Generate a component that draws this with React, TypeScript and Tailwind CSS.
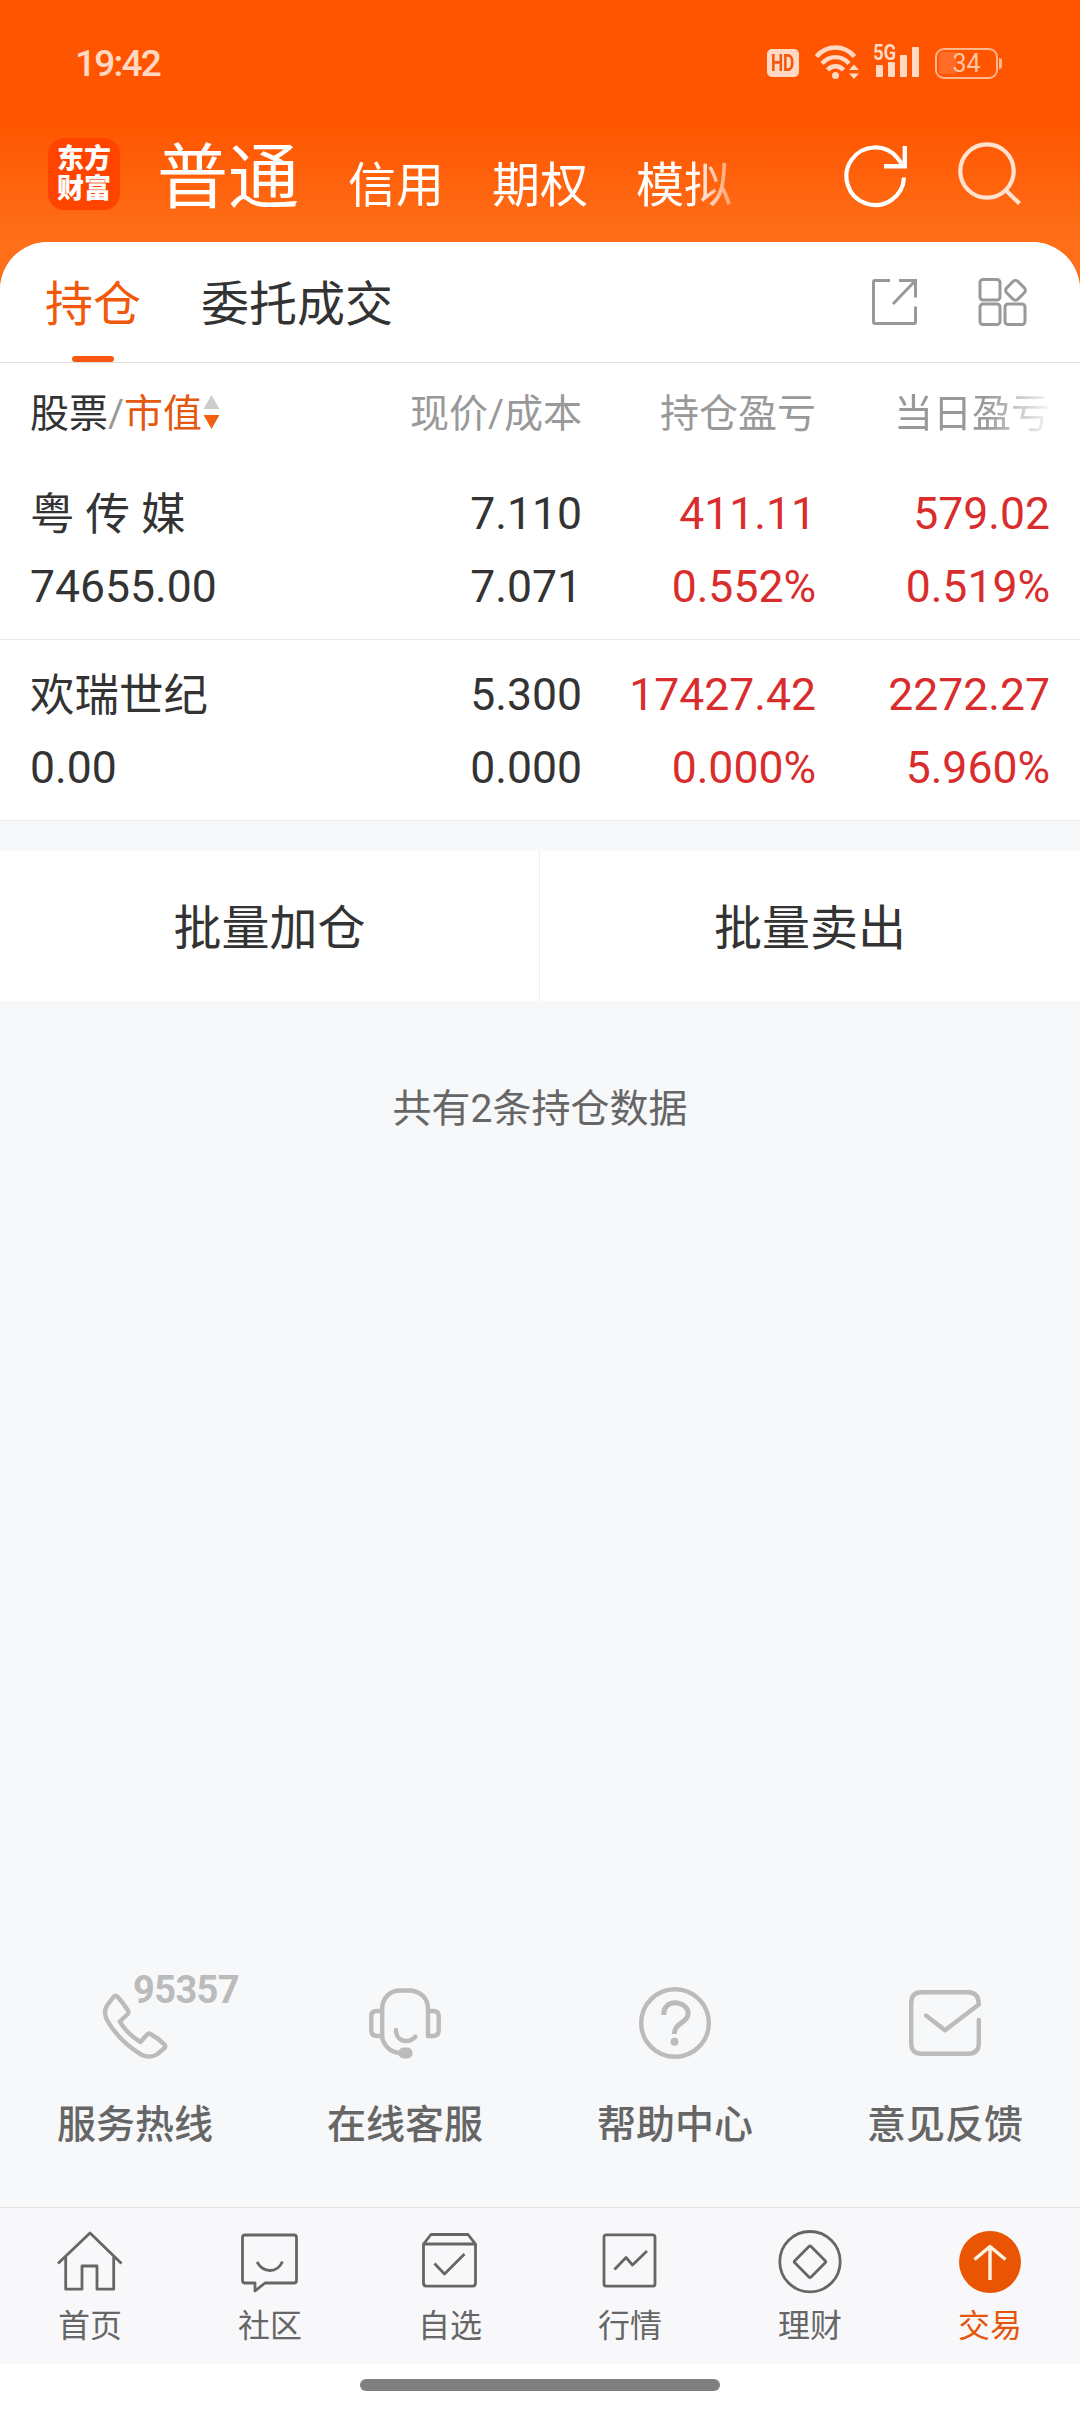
import type { ReactNode } from "react";

const holdings = [
  {
    name: "粤 传 媒",
    value: "74655.00",
    price: "7.110",
    cost: "7.071",
    profit: "411.11",
    profitRate: "0.552%",
    today: "579.02",
    todayRate: "0.519%",
  },
  {
    name: "欢瑞世纪",
    value: "0.00",
    price: "5.300",
    cost: "0.000",
    profit: "17427.42",
    profitRate: "0.000%",
    today: "2272.27",
    todayRate: "5.960%",
  },
];

function StatusBar() {
  return (
    <div className="flex h-[126px] items-center pl-[75px] pr-[78px] text-[#ffd9c4]">
      <span className="text-[37px] font-medium leading-none tracking-[-1.8px]">19:42</span>

      <div className="ml-auto flex items-center">
        <span className="flex h-7 w-8 items-center justify-center rounded-[5px] bg-[#ffd9c4] text-[23px] font-bold leading-none text-[#f4570f]">
          <span className="scale-x-75">HD</span>
        </span>

        <svg className="ml-4" width="44" height="38" viewBox="0 0 44 38" fill="none">
          <g stroke="currentColor" strokeWidth="4.4">
            <path d="M1.5 12.5C12 0.5 29 0.5 39.5 12.5" />
            <path d="M7 19.5C14.5 11 26.5 11 34 19.5" />
            <path d="M12.5 26C17 21 24 21 28.5 26" />
          </g>
          <circle cx="20.5" cy="31.5" r="3.5" fill="currentColor" />
          <path d="M34 26L39 20.5L44 26ZM34 29.5L39 35L44 29.5Z" fill="currentColor" />
        </svg>

        <div className="relative ml-3.5 h-[38px] w-[46px]">
          <span className="absolute left-0 top-[-2px] origin-left scale-x-[0.84] text-[22px] font-bold leading-[22px]">
            5G
          </span>
          <svg className="absolute left-0 top-0" width="46" height="38" viewBox="0 0 46 38" fill="currentColor">
            <rect x="3" y="21" width="7" height="12" rx="1" />
            <rect x="15" y="18" width="7" height="15" rx="1" />
            <rect x="27" y="11" width="7" height="22" rx="1" />
            <rect x="39" y="3" width="7" height="30" rx="1" />
          </svg>
        </div>

        <div className="ml-4 flex items-center">
          <div className="relative flex h-[31px] w-[63px] items-center justify-center overflow-hidden rounded-[9px] border-[2.5px] border-[#ffb78f]">
            <div className="absolute left-[2px] top-[2px] h-[22px] w-[17px] rounded-l-[4px] bg-[#ff6d27]" />
            <span className="relative text-[25px] leading-none text-[#ffc5a3]">34</span>
          </div>
          <div className="ml-px h-[11px] w-[3px] rounded-r-full bg-[#ffb78f]" />
        </div>
      </div>
    </div>
  );
}

function Header() {
  return (
    <header className="flex h-[116px] pl-12 text-white">
      <div className="mt-3 flex h-[72px] w-[72px] flex-col items-center justify-center rounded-2xl bg-[#ff4400] text-[27px] font-black leading-[30px]">
        <span>东方</span>
        <span>财富</span>
      </div>

      <div className="ml-[37px] flex h-[116px] w-[591px] items-baseline whitespace-nowrap pt-4 text-5xl leading-[72px] [mask-image:linear-gradient(to_right,#000_535px,transparent_600px)]">
        <span className="w-[191px] text-[71px]">普通</span>
        <span className="w-36">信用</span>
        <span className="w-36">期权</span>
        <span>模拟</span>
      </div>

      <svg className="ml-[94px] mt-4" width="68" height="68" viewBox="0 0 68 68" fill="none">
        <path d="M62 35.5A28.8 28.8 0 1 1 55.5 16L60 22" stroke="#fff" strokeWidth="4.2" />
        <path d="M62.8 4V24.2H42" stroke="#fff" strokeWidth="4.4" />
      </svg>
      <svg className="ml-[46px] mt-4" width="68" height="68" viewBox="0 0 68 68" fill="none">
        <g stroke="#ffe3d0" strokeWidth="4.2">
          <circle cx="31" cy="29" r="26.7" />
          <path d="M49.5 48L63.5 61.5" />
        </g>
      </svg>
    </header>
  );
}

function Tabs() {
  return (
    <div className="flex h-[121px] items-center border-b border-[#e0e0e0] pl-[45px] text-5xl">
      <div className="relative flex h-[120px] items-center pt-1.5 text-[#f0590c]">
        持仓
        <span className="absolute bottom-0 left-[27px] h-1.5 w-[42px] rounded-full bg-[#f9560f]" />
      </div>
      <div className="ml-[60px] pt-1.5 text-[#333]">委托成交</div>

      <svg className="ml-auto" width="48" height="48" viewBox="0 0 48 48" fill="none" stroke="#999" strokeWidth="3">
        <path d="M19 2.5H4Q2.5 2.5 2.5 4V44Q2.5 45.5 4 45.5H43Q44.5 45.5 44.5 44V28.5" />
        <path d="M28 2.5H44.5V19.5M44 3L22 26" />
      </svg>
      <svg className="ml-[59px] mr-[52px]" width="50" height="50" viewBox="0 0 50 50" fill="none" stroke="#999" strokeWidth="3">
        <rect x="2" y="2.5" width="20" height="20.5" rx="3" />
        <rect x="2" y="27" width="20" height="20.5" rx="3" />
        <rect x="27" y="27" width="20" height="20.5" rx="3" />
        <rect x="29.5" y="5.3" width="16" height="16" rx="3.5" transform="rotate(45 37.5 13.3)" />
      </svg>
    </div>
  );
}

function HoldingsTable() {
  return (
    <div className="bg-white">
      <div className="grid h-24 grid-cols-[314px_238px_234px_234px] items-center px-[30px] pt-1.5 text-right text-[39px] text-[#999]">
        <div className="flex items-center text-left">
          <span className="text-[#333]">股票</span>
          <span>/</span>
          <span className="text-[#e2590f]">市值</span>
          <svg className="-mt-1 ml-px" width="17" height="36" viewBox="0 0 17 36">
            <path d="M0.5 15L8.5 1L16.5 15Z" fill="#ccc" />
            <path d="M0.5 21L8.5 35L16.5 21Z" fill="#f26010" />
          </svg>
        </div>
        <span>现价/成本</span>
        <span>持仓盈亏</span>
        <span className="[mask-image:linear-gradient(to_right,#000_170px,transparent_240px)]">当日盈亏</span>
      </div>

      {holdings.map((h) => (
        <div
          key={h.name}
          className="grid h-[181px] grid-cols-[314px_238px_234px_234px] border-b border-[#ebebeb] px-[30px] pt-[19px] text-right text-[44.5px] leading-[73px] text-[#333]"
        >
          <div className="text-left">
            <div className="relative top-px">{h.name}</div>
            <div>{h.value}</div>
          </div>
          <div>
            <div>{h.price}</div>
            <div>{h.cost}</div>
          </div>
          <div className="text-[#d92d2d]">
            <div>{h.profit}</div>
            <div>{h.profitRate}</div>
          </div>
          <div className="text-[#d92d2d]">
            <div>{h.today}</div>
            <div>{h.todayRate}</div>
          </div>
        </div>
      ))}
    </div>
  );
}

function Service({ label, children }: { label: string; children: ReactNode }) {
  return (
    <div className="flex flex-col items-center">
      <div className="relative h-[72px] w-[72px]">
        <svg
          width="72"
          height="72"
          viewBox="0 0 72 72"
          fill="none"
          stroke="#bbb"
          strokeWidth="4.4"
          strokeLinecap="round"
          strokeLinejoin="round"
        >
          {children}
        </svg>
        {label === "服务热线" && (
          <span className="absolute left-[34px] top-[-16px] text-[38px] font-bold leading-[38px] tracking-[-0.6px] text-[#bbb]">
            95357
          </span>
        )}
      </div>
      <span className="mt-[38px] text-[39px] font-medium leading-[56px] text-[#666]">{label}</span>
    </div>
  );
}

function NavItem({ label, active, children }: { label: string; active?: boolean; children: ReactNode }) {
  return (
    <div className={`flex flex-col items-center ${active ? "text-[#e5560a]" : "text-[#666]"}`}>
      <svg
        width="72"
        height="72"
        viewBox="0 0 72 72"
        fill="none"
        stroke="currentColor"
        strokeWidth="2.8"
        strokeLinejoin="round"
      >
        {children}
      </svg>
      <span className="mt-2 text-[32px] leading-10">{label}</span>
    </div>
  );
}

export default function App() {
  return (
    <div className="flex h-[2412px] w-[1080px] flex-col overflow-hidden bg-[linear-gradient(to_bottom,#ff5500_120px,#ff6e18_235px)] font-['Roboto','Noto_Sans_CJK_SC',sans-serif]">
      <StatusBar />
      <Header />

      <main className="flex flex-1 flex-col overflow-hidden rounded-t-[48px] bg-[#f7f8fa]">
        <div className="bg-white">
          <Tabs />
          <HoldingsTable />
        </div>

        <div className="mt-[30px] grid h-[150px] grid-cols-2 bg-white text-5xl text-[#333]">
          <button className="border-r border-[#eee] pt-1.5">批量加仓</button>
          <button className="pt-1.5">批量卖出</button>
        </div>

        <p className="mt-20 text-center text-[39px] leading-[56px] text-[#666]">共有2条持仓数据</p>

        <div className="mb-[54px] mt-auto grid grid-cols-4">
          <Service label="服务热线">
            <path d="M14.5 10Q16.5 7.5 18.8 10Q24.5 16.5 29 23.5Q30 25.5 28.8 27L20.8 34.5Q28 47 41.5 55L48 47.5Q49.5 46 51.5 47Q59 51 65.5 57.5Q67 59.5 65.5 61L58.5 67Q51 72 42 67.5Q20 54 8 33Q4 25 8 18.5Z" />
          </Service>
          <Service label="在线客服">
            <path d="M13.2 49V22C13.2 11 21 3.5 31 3.5H40C51 3.5 59 11 59 22V49H64Q69.7 49 69.7 43V29Q69.7 24 64 24H59.5" />
            <path d="M13 24H8Q2.3 24 2.3 29V43Q2.3 49 8 49H13C14 58 21 65.5 31 66" />
            <path d="M27 43C27 50 31.5 54 37.5 54Q42.5 54 46.3 49.7" />
            <rect x="29.5" y="60.5" width="14" height="11" rx="5" fill="#bbb" stroke="none" />
          </Service>
          <Service label="帮助中心">
            <circle cx="36" cy="36" r="33.8" />
            <path
              d="M24.8 28V26.5C24.8 20 29.5 15.8 36 15.8C43 15.8 49.5 20.5 49.2 26.5C49 36 35.3 35.5 35.3 47"
              strokeWidth="5"
              strokeLinecap="butt"
            />
            <circle cx="35.5" cy="54.7" r="4" fill="#bbb" stroke="none" />
          </Service>
          <Service label="意见反馈">
            <path d="M69.8 33V56Q69.8 66.8 59 66.8H13Q2.2 66.8 2.2 56V16Q2.2 5.2 13 5.2H59Q69.8 5.2 69.8 17.5L36 43.3L17 28.5" />
          </Service>
        </div>

        <nav className="grid h-[157px] grid-cols-6 border-t border-[#e2e2e2] bg-[#f8f8fa] pt-[18px]">
          <NavItem label="首页">
            <path d="M4 37.5L36 7L67.5 37.5M11.7 31V63.2H28V40H43V63.2H59.7V31" />
          </NavItem>
          <NavItem label="社区">
            <path d="M11 9H60Q62.5 9 62.5 11.5V54.5Q62.5 57 60 57H31L21 65V57H11Q8.5 57 8.5 54.5V11.5Q8.5 9 11 9Z" />
            <path d="M23 36Q28 44.5 36 44.5Q44.5 44.5 48.5 35.5" />
          </NavItem>
          <NavItem label="自选">
            <path d="M9.5 18L17 8.5H54L61.5 18V57Q61.5 60.2 58.5 60.2H12.5Q9.5 60.2 9.5 57ZM9.5 18H61.5" />
            <path d="M20.5 37.5L30.5 48L50.5 28" />
          </NavItem>
          <NavItem label="行情">
            <rect x="10" y="8.8" width="51" height="51.4" rx="2.5" />
            <path d="M20.5 43.5L32 31.5L38.5 39L53 25" />
          </NavItem>
          <NavItem label="理财">
            <circle cx="36" cy="35.7" r="30.2" />
            <rect x="24.5" y="24.2" width="23" height="23" rx="1.5" transform="rotate(45 36 35.7)" />
          </NavItem>
          <NavItem label="交易" active>
            <circle cx="36" cy="36" r="31" fill="#ea5504" stroke="none" />
            <path d="M36 54V20.5M20.5 33.5L36 20.5L51.5 33.5" stroke="#fff3e4" strokeWidth="3.4" />
          </NavItem>
        </nav>

        <div className="flex h-12 shrink-0 justify-center bg-white pt-[15px]">
          <div className="h-3 w-[360px] rounded-full bg-[#808080]" />
        </div>
      </main>
    </div>
  );
}
